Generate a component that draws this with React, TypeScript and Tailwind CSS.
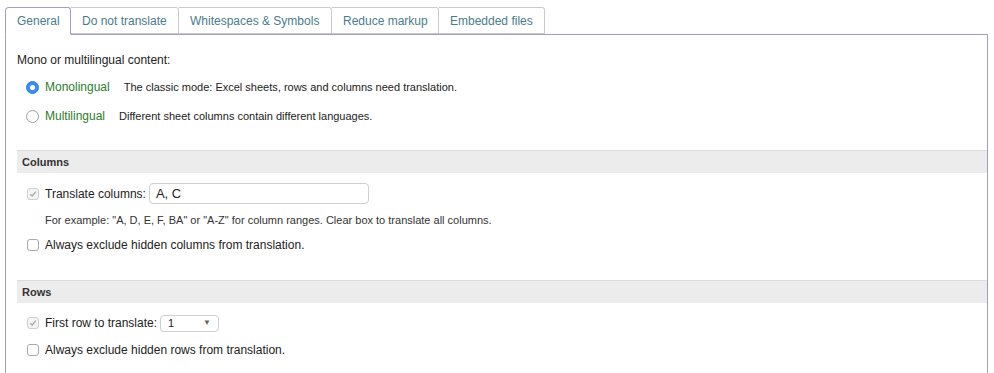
import type { ReactNode } from 'react'

const tabs = ['General', 'Do not translate', 'Whitespaces & Symbols', 'Reduce markup', 'Embedded files']

function Radio({ checked }: { checked?: boolean }) {
  if (checked) {
    return (
      <span className="w-[13px] h-[13px] rounded-full bg-[#3b8ef0] border border-[#2f7fe0] flex items-center justify-center shrink-0">
        <span className="w-[5px] h-[5px] rounded-full bg-white" />
      </span>
    )
  }
  return <span className="w-[13px] h-[13px] rounded-full bg-white border border-[#9d9d9d] shrink-0" />
}

function Checkbox({ checked }: { checked?: boolean }) {
  return (
    <span
      className={`w-[12px] h-[12px] rounded-[3px] border shrink-0 flex items-center justify-center ${
        checked ? 'border-[#cfcfcf] bg-[#f4f4f4]' : 'border-[#a9a9a9] bg-white'
      }`}
    >
      {checked && (
        <svg width="8" height="8" viewBox="0 0 8 8">
          <path d="M1.3 4.2 L3.2 6 L6.8 1.6" fill="none" stroke="#a8a8a8" strokeWidth="1.2" />
        </svg>
      )}
    </span>
  )
}

function SectionBar({ children, className }: { children: ReactNode; className?: string }) {
  return (
    <div
      className={`ml-[11px] h-[23px] bg-[#ececec] border-t border-[#dcdcdc] flex items-center pl-[5px] text-[11px] font-bold text-[#333] ${className ?? ''}`}
    >
      {children}
    </div>
  )
}

export default function App() {
  return (
    <div className="w-[994px] h-[373px] bg-white overflow-hidden text-[12px] text-[#222]" style={{ fontFamily: '"Liberation Sans", Arial, sans-serif' }}>
      {/* Tabs */}
      <div className="flex ml-[5px] mt-[7px] relative z-10">
        {tabs.map((t, i) => (
          <div
            key={t}
            className={
              i === 0
                ? 'h-[28px] w-[66px] shrink-0 whitespace-nowrap border border-[#a59bc9] border-b-white bg-white rounded-tl-[4px] rounded-tr-[3px] flex items-center pl-[11px] text-[#4a7c8c]'
                : `h-[27px] shrink-0 whitespace-nowrap border border-l-0 border-[#cbcbcb] rounded-tr-[3px] flex items-center pl-[11px] text-[#4a7c8c] ${
                    i === 1 ? 'w-[108px]' : i === 2 ? 'w-[153px]' : i === 3 ? 'w-[107px]' : 'w-[106px]'
                  }`
            }
          >
            {t}
          </div>
        ))}
      </div>

      {/* Panel */}
      <div className="ml-[5px] mr-[6px] -mt-px border border-[#a59bc9] h-[400px]">
        <div className="ml-[11px] mt-[17px] h-[16px] leading-[16px]">Mono or multilingual content:</div>

        <div className="ml-[20px] mt-[9px] h-[20px] flex items-center">
          <Radio checked />
          <span className="ml-[6px] text-[#2b7d2b]">Monolingual</span>
          <span className="ml-[14px] text-[11px]">The classic mode: Excel sheets, rows and columns need translation.</span>
        </div>
        <div className="ml-[20px] mt-[9px] h-[20px] flex items-center">
          <Radio />
          <span className="ml-[6px] text-[#2b7d2b]">Multilingual</span>
          <span className="ml-[14px] text-[11px]">Different sheet columns contain different languages.</span>
        </div>

        <SectionBar className="mt-[24px]">Columns</SectionBar>

        <div className="ml-[21px] mt-[10px] h-[21px] flex items-center">
          <Checkbox checked />
          <span className="ml-[6px]">Translate columns:</span>
          <div className="ml-[3px] w-[220px] h-[21px] border border-[#cfcfcf] rounded-[4px] flex items-center pl-[6px] text-[13px]">
            A, C
          </div>
        </div>
        <div className="ml-[39px] mt-[8px] h-[16px] leading-[16px] text-[11px] text-[#333]">
          For example: "A, D, E, F, BA" or "A-Z" for column ranges. Clear box to translate all columns.
        </div>
        <div className="ml-[21px] mt-[7px] h-[20px] flex items-center">
          <Checkbox />
          <span className="ml-[6px]">Always exclude hidden columns from translation.</span>
        </div>

        <SectionBar className="mt-[25px]">Rows</SectionBar>

        <div className="ml-[21px] mt-[10px] h-[20px] flex items-center">
          <Checkbox checked />
          <span className="ml-[6px]">First row to translate:</span>
          <div className="ml-[3px] w-[59px] h-[17px] border border-[#cfcfcf] rounded-[4px] flex items-center justify-between pl-[7px] pr-[7px] text-[11px]">
            <span>1</span>
            <span className="text-[8px] text-[#666]">▼</span>
          </div>
        </div>
        <div className="ml-[21px] mt-[7px] h-[20px] flex items-center">
          <Checkbox />
          <span className="ml-[6px]">Always exclude hidden rows from translation.</span>
        </div>
      </div>
    </div>
  )
}
